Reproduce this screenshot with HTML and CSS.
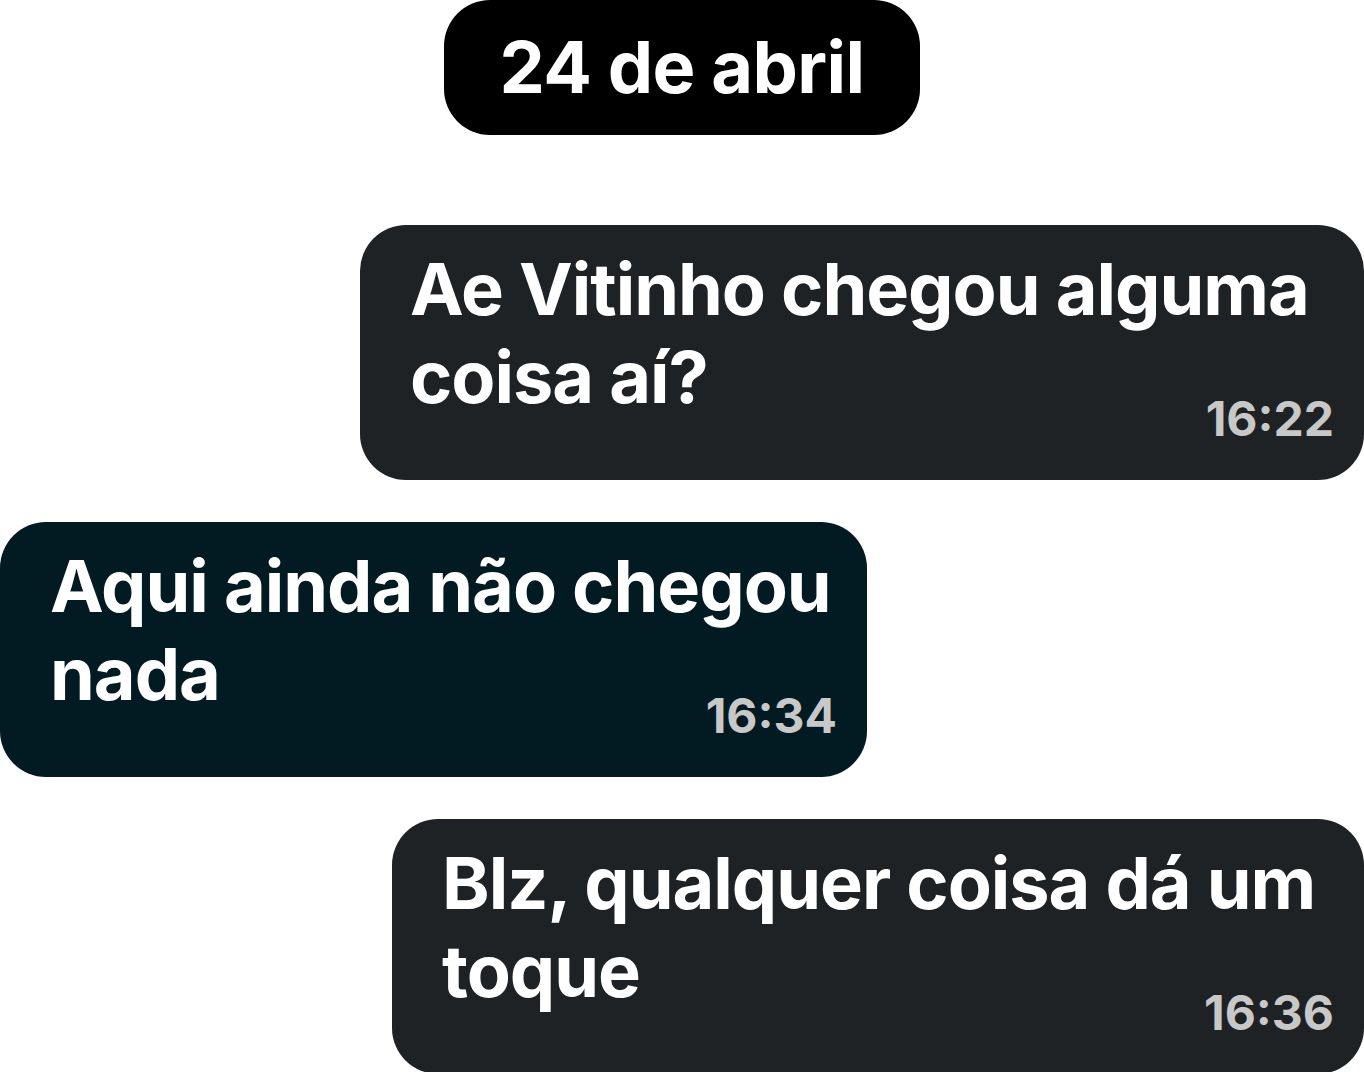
FILE: index.html
```html
<!DOCTYPE html>
<html lang="pt-BR">
<head>
<meta charset="utf-8">
<title>Chat</title>
<link rel="stylesheet" href="styles.css">
</head>
<body>
<main class="chat">
  <div class="date-row"><div class="date-pill">24 de abril</div></div>
  <div class="msg-list">
    <div class="bubble bubble--out bubble--w1">
      <p class="bubble__text">Ae Vitinho chegou alguma<br>coisa aí?</p>
      <span class="bubble__time">16:22</span>
    </div>
    <div class="bubble bubble--in bubble--w2">
      <p class="bubble__text">Aqui ainda não chegou<br>nada</p>
      <span class="bubble__time">16:34</span>
    </div>
    <div class="bubble bubble--out bubble--w3">
      <p class="bubble__text">Blz, qualquer coisa dá um<br>toque</p>
      <span class="bubble__time">16:36</span>
    </div>
  </div>
</main>
</body>
</html>
```
FILE: styles.css
```css
html, body {
  margin: 0;
  padding: 0;
  background: #ffffff;
}
body {
  font-family: Inter, "Liberation Sans", sans-serif;
  font-weight: 700;
  color: #ffffff;
}
.chat {
  width: 1364px;
  display: flex;
  flex-direction: column;
}
.date-row {
  display: flex;
  justify-content: center;
}
.date-pill {
  background: #000000;
  border-radius: 46px;
  padding: 24px 56px 25px;
  font-size: 72px;
  line-height: 86px;
  letter-spacing: -0.6px;
}
.msg-list {
  margin-top: 90px;
  display: flex;
  flex-direction: column;
  gap: 42px;
}
.bubble {
  display: flex;
  flex-direction: column;
  border-radius: 46px;
  padding: 20px 30px 32px 50px;
  box-sizing: border-box;
}
.bubble--w1 { width: 1004px; }
.bubble--w2 { width: 867px; }
.bubble--w3 { width: 972px; }
.bubble--out {
  align-self: flex-end;
  background: #1f2224;
}
.bubble--in {
  align-self: flex-start;
  background: #021a22;
}
.bubble__text {
  margin: 0;
  font-size: 72px;
  line-height: 88px;
  letter-spacing: -1px;
  white-space: nowrap;
}
.bubble__time {
  align-self: flex-end;
  margin-top: -31px;
  font-size: 48px;
  line-height: 58px;
  color: #c8c8c8;
}
```
